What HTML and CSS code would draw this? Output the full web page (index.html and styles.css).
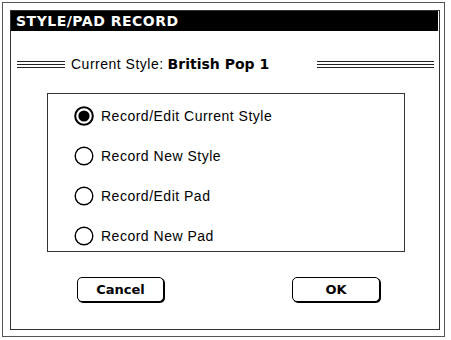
FILE: index.html
```html
<!DOCTYPE html>
<html lang="en">
<head>
    <meta charset="UTF-8">
    <title>STYLE/PAD RECORD</title>
    <link rel="stylesheet" href="styles.css">
</head>
<body>
    <div class="window">
        <div class="dialog">
            <div class="title-bar">STYLE/PAD RECORD</div>

            <div class="style-row">
                <div class="rule rule-left"></div>
                <div class="style-label">Current Style:<b class="style-name">British Pop 1</b></div>
                <div class="rule rule-right"></div>
            </div>

            <div class="options">
                <label class="option">
                    <svg class="radio" width="20" height="20" viewBox="0 0 20 20">
                        <circle cx="10" cy="10" r="8.8" fill="#fff" stroke="#000" stroke-width="2"/>
                        <circle cx="10" cy="10" r="5.6" fill="#000"/>
                    </svg>
                    <span>Record/Edit Current Style</span>
                </label>
                <label class="option">
                    <svg class="radio" width="20" height="20" viewBox="0 0 20 20">
                        <circle cx="10" cy="10" r="8.8" fill="#fff" stroke="#000" stroke-width="1.4"/>
                    </svg>
                    <span>Record New Style</span>
                </label>
                <label class="option">
                    <svg class="radio" width="20" height="20" viewBox="0 0 20 20">
                        <circle cx="10" cy="10" r="8.8" fill="#fff" stroke="#000" stroke-width="1.4"/>
                    </svg>
                    <span>Record/Edit Pad</span>
                </label>
                <label class="option">
                    <svg class="radio" width="20" height="20" viewBox="0 0 20 20">
                        <circle cx="10" cy="10" r="8.8" fill="#fff" stroke="#000" stroke-width="1.4"/>
                    </svg>
                    <span>Record New Pad</span>
                </label>
            </div>

            <div class="buttons">
                <button class="btn btn-cancel">Cancel</button>
                <button class="btn btn-ok">OK</button>
            </div>
        </div>
    </div>
</body>
</html>
```

FILE: styles.css
```css
* {
    margin: 0;
    padding: 0;
    box-sizing: border-box;
}

body {
    width: 451px;
    height: 340px;
    background: #ffffff;
    font-family: 'Liberation Sans', Arial, sans-serif;
    color: #000000;
    overflow: hidden;
}

/* 바깥 창 테두리 */
.window {
    margin: 2px 0 0 2px;
    width: 443px;
    height: 335px;
    border: 1px solid #555555;
    padding: 7px 0 0 7px;
}

.dialog {
    width: 430px;
    height: 320px;
    border: 1px solid #333333;
    display: flex;
    flex-direction: column;
}

.title-bar {
    height: 20px;
    margin-right: 1px;
    background: #000000;
    color: #ffffff;
    font-family: 'DejaVu Sans', sans-serif;
    font-weight: bold;
    font-size: 14px;
    letter-spacing: 0.5px;
    line-height: 20px;
    padding-left: 5px;
}

.style-row {
    display: flex;
    align-items: center;
    height: 20px;
    margin-top: 23px;
    padding: 0 5px 0 6px;
}

.rule {
    height: 7px;
    background: repeating-linear-gradient(to bottom, #222222 0 1px, transparent 1px 3px);
}

.rule-left {
    width: 48px;
    margin-right: 6px;
}

.rule-right {
    flex: 1;
    margin-left: 48px;
}

.style-label {
    font-size: 14px;
    letter-spacing: 0.5px;
    white-space: nowrap;
}

.style-name {
    font-family: 'DejaVu Sans', sans-serif;
    font-size: 14px;
    letter-spacing: 0;
    margin-left: 4px;
}

.options {
    margin: 19px 34px 0 36px;
    height: 159px;
    border: 1px solid #333333;
    padding: 12px 0 0 26px;
    display: flex;
    flex-direction: column;
    gap: 20px;
}

.option {
    display: flex;
    align-items: center;
    gap: 7px;
    height: 20px;
    font-size: 14px;
    letter-spacing: 0.5px;
}

.radio {
    display: block;
    flex-shrink: 0;
}

.buttons {
    display: flex;
    margin-top: 25px;
    padding-left: 66px;
}

.btn {
    height: 25px;
    background: #ffffff;
    border: 1px solid #000000;
    border-radius: 5px;
    box-shadow: 1px 1px 0 #000000;
    font-family: 'DejaVu Sans', sans-serif;
    font-weight: bold;
    font-size: 13px;
    color: #000000;
}

.btn-cancel {
    width: 87px;
}

.btn-ok {
    width: 88px;
    margin-left: 128px;
}
```
